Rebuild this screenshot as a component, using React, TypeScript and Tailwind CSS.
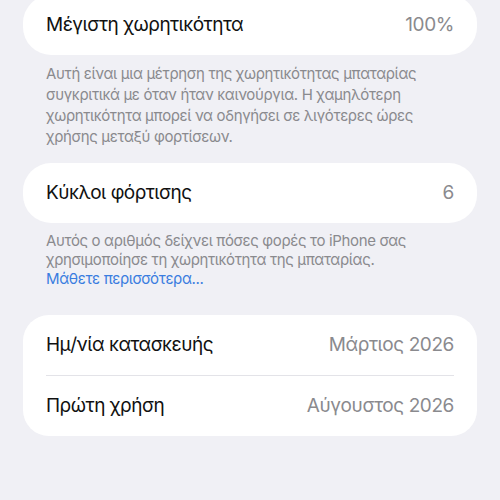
import React from "react";

const font = { fontFamily: "Inter, 'Noto Sans', sans-serif" };

function Row({ label, value }: { label: string; value: string }) {
  return (
    <div className="flex h-[60px] items-center justify-between px-[23px]">
      <span className="text-[19px] tracking-[-0.5px] text-[#111]">{label}</span>
      <span className="text-[19px] tracking-[-0.4px] text-[#8a8a8e]">{value}</span>
    </div>
  );
}

export default function App() {
  return (
    <div className="h-[500px] w-[500px] overflow-hidden bg-[#f0f0f5]" style={font}>
      <div className="mx-[23px] mt-[-5px] rounded-[28px] bg-white">
        <Row label="Μέγιστη χωρητικότητα" value="100%" />
      </div>
      <p className="mx-[46px] mt-[8px] text-[15px] leading-[21px] tracking-[-0.35px] text-[#8a8a8e]">
        Αυτή είναι μια μέτρηση της χωρητικότητας μπαταρίας συγκριτικά με όταν ήταν καινούργια. Η χαμηλότερη χωρητικότητα μπορεί να οδηγήσει σε λιγότερες ώρες χρήσης μεταξύ φορτίσεων.
      </p>
      <div className="mx-[23px] mt-[16px] rounded-[28px] bg-white">
        <Row label="Κύκλοι φόρτισης" value="6" />
      </div>
      <p className="mx-[46px] mt-[8px] text-[15px] leading-[19px] tracking-[-0.35px] text-[#8a8a8e]">
        Αυτός ο αριθμός δείχνει πόσες φορές το iPhone σας χρησιμοποίησε τη χωρητικότητα της μπαταρίας.
        <br />
        <span className="text-[#3a7de0]">Μάθετε περισσότερα...</span>
      </p>
      <div className="mx-[23px] mt-[27px] rounded-[26px] bg-white">
        <Row label="Ημ/νία κατασκευής" value="Μάρτιος 2026" />
        <div className="mx-[23px] h-px bg-[#e3e3e8]" />
        <Row label="Πρώτη χρήση" value="Αύγουστος 2026" />
      </div>
    </div>
  );
}
